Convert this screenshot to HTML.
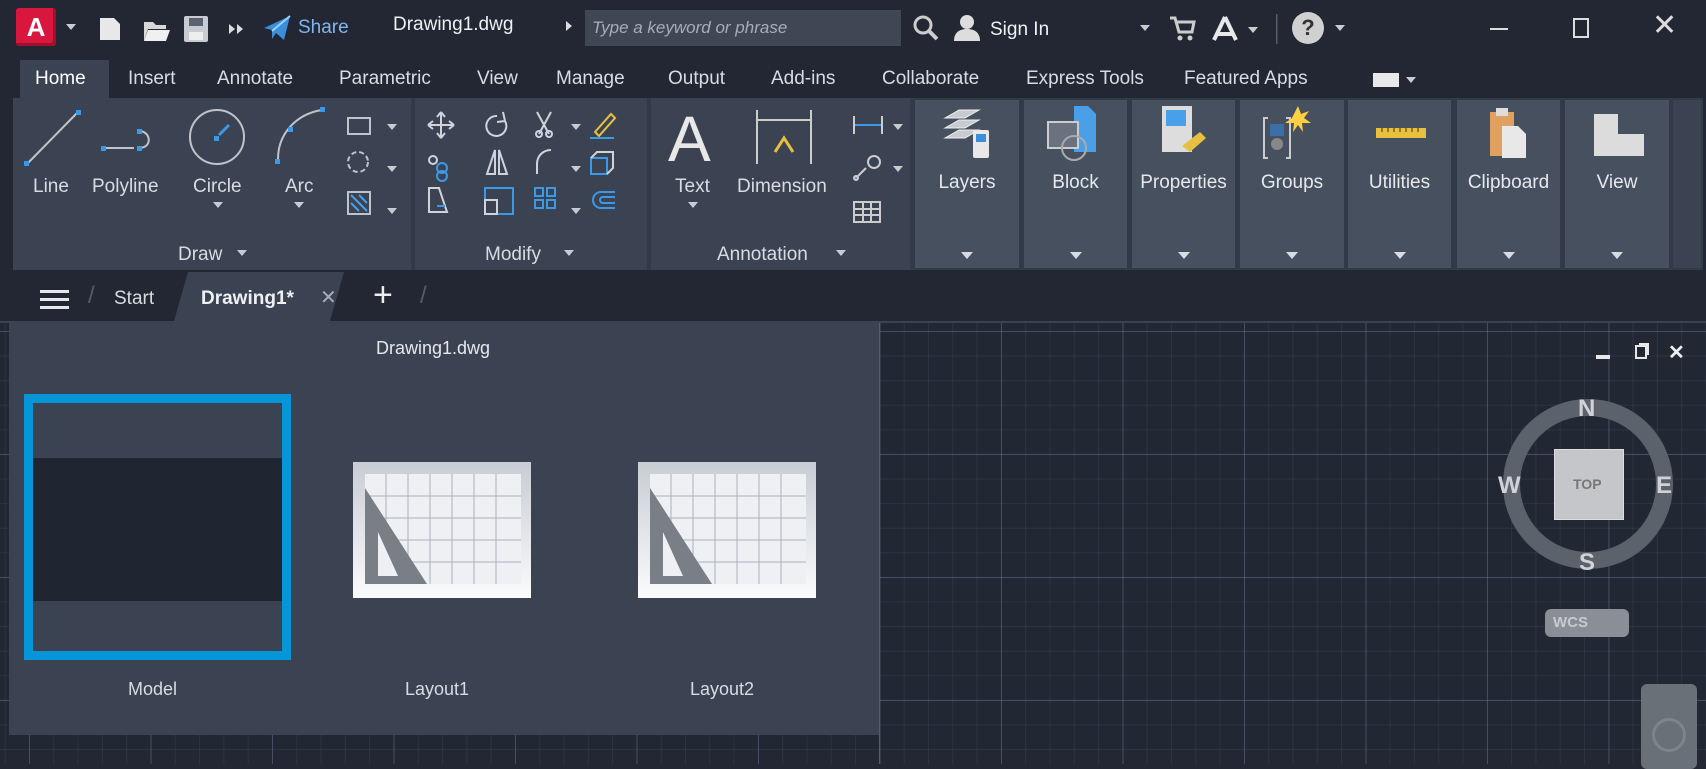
<!DOCTYPE html>
<html><head><meta charset="utf-8"><style>
*{margin:0;padding:0;box-sizing:border-box}
body{width:1706px;height:764px;overflow:hidden;background:#222733;font-family:"Liberation Sans",sans-serif;color:#e6e8ec;position:relative}
.a{position:absolute;white-space:nowrap}
.t{font-size:19px;color:#d8dce2}
.pl{position:absolute;background:#3b4353}
.bp{position:absolute;top:100px;height:168px;background:#46505f}
.bp span{position:absolute;left:0;right:0;top:72px;text-align:center;font-size:19px;color:#e6e8ec}
.bp i{position:absolute;left:50%;margin-left:-6px;top:152px;border:6px solid transparent;border-top:7px solid #d8dce2}
.tri{position:absolute;border:5px solid transparent;border-top:6px solid #c8ccd2}
.grid{background-color:#212733;background-image:linear-gradient(90deg,rgba(120,130,160,.35) 1px,transparent 1px),linear-gradient(rgba(120,130,160,.35) 1px,transparent 1px),linear-gradient(90deg,rgba(90,100,125,.2) 1px,transparent 1px),linear-gradient(rgba(90,100,125,.2) 1px,transparent 1px);background-size:121.5px 123px,121.5px 123px,24.3px 24.6px,24.3px 24.6px;background-position:29px 10px,29px 10px,29px 10px,29px 10px}
</style></head><body>
<!-- title bar -->
<div class="a" style="left:0;top:0;width:1706px;height:58px;background:#222733"></div>
<div class="a" style="left:16px;top:8px;width:40px;height:38px;background:#d8163e;border-radius:3px;box-shadow:inset -3px -3px 0 #a0102c;color:#fff;font:bold 26px 'Liberation Sans';text-align:center;line-height:38px">A</div>
<div class="tri" style="left:66px;top:24px"></div>
<svg class="a" style="left:96px;top:12px" width="160" height="34"><path d="M4 6h14l6 6v16H4z" fill="#e8e8e8"/><path d="M48 10h9l3 3h10v4H52l-4 12z" fill="#d8d8d8"/><path d="M52 18h22l-4 11H48z" fill="#f0f0f0"/><rect x="88" y="4" width="24" height="26" rx="2" fill="#c8ccd2"/><rect x="93" y="6" width="14" height="8" fill="#5a6170"/><rect x="93" y="20" width="14" height="8" fill="#eee"/><path d="M133 12l6 5-6 5zM141 12l6 5-6 5z" fill="#ddd"/></svg>
<svg class="a" style="left:262px;top:14px" width="30" height="28"><path d="M2 14L28 2l-6 24-8-7-4 6v-9z" fill="#3a8fd8"/><path d="M10 17L28 2" stroke="#9cd0ff" stroke-width="2"/></svg>
<div class="a t" style="left:298px;top:17px;color:#7fb6f0">Share</div>
<div class="a t" style="left:393px;top:14px;color:#eef0f3">Drawing1.dwg</div>
<div class="a" style="left:566px;top:21px;border:5px solid transparent;border-left:6px solid #ddd"></div>
<div class="a" style="left:585px;top:10px;width:316px;height:36px;background:#3f4654"></div>
<div class="a" style="left:592px;top:18px;font-style:italic;font-size:17px;color:#a8adb6">Type a keyword or phrase</div>
<svg class="a" style="left:912px;top:14px" width="28" height="28"><circle cx="11" cy="11" r="8" fill="none" stroke="#ccc" stroke-width="3"/><path d="M17 17l8 8" stroke="#ccc" stroke-width="4"/></svg>
<svg class="a" style="left:952px;top:13px" width="30" height="30"><circle cx="15" cy="9" r="7" fill="#ddd"/><path d="M2 28c0-9 6-12 13-12s13 3 13 12z" fill="#ddd"/></svg>
<div class="a t" style="left:990px;top:19px;color:#eef0f3">Sign In</div>
<div class="tri" style="left:1140px;top:25px"></div>
<svg class="a" style="left:1168px;top:14px" width="110" height="30"><path d="M2 4h5l4 14h13l2-10H9" fill="none" stroke="#ccc" stroke-width="3"/><circle cx="12" cy="24" r="2.5" fill="#ccc"/><circle cx="22" cy="24" r="2.5" fill="#ccc"/><path d="M57 3L46 26M57 3l11 23M49 20h16" stroke="#e8e8e8" stroke-width="4" fill="none"/><path d="M80 13l5 6 5-6z" fill="#ccc"/><rect x="108" y="0" width="1.5" height="32" fill="#555c68"/></svg>
<div class="a" style="left:1292px;top:12px;width:32px;height:32px;border-radius:50%;background:#d0d0d0;color:#333;font:bold 22px 'Liberation Sans';text-align:center;line-height:32px">?</div>
<div class="tri" style="left:1335px;top:25px"></div>
<div class="a" style="left:1490px;top:28px;width:18px;height:2px;background:#ddd"></div>
<div class="a" style="left:1573px;top:18px;width:16px;height:20px;border:2px solid #ddd"></div>
<div class="a" style="left:1652px;top:8px;font-size:30px;color:#ddd">✕</div>
<!-- menu tabs -->
<div class="a" style="left:20px;top:60px;width:89px;height:38px;background:#3b4353"></div>
<div class="a t" style="left:35px;top:68px;color:#fff">Home</div>
<div class="a t" style="left:128px;top:68px">Insert</div>
<div class="a t" style="left:217px;top:68px">Annotate</div>
<div class="a t" style="left:339px;top:68px">Parametric</div>
<div class="a t" style="left:477px;top:68px">View</div>
<div class="a t" style="left:556px;top:68px">Manage</div>
<div class="a t" style="left:668px;top:68px">Output</div>
<div class="a t" style="left:771px;top:68px">Add-ins</div>
<div class="a t" style="left:882px;top:68px">Collaborate</div>
<div class="a t" style="left:1026px;top:68px">Express Tools</div>
<div class="a t" style="left:1184px;top:68px">Featured Apps</div>
<div class="a" style="left:1373px;top:73px;width:26px;height:14px;background:#e8e8e8"></div>
<div class="tri" style="left:1406px;top:77px"></div>
<!-- ribbon -->
<div class="pl" style="left:13px;top:98px;width:1690px;height:172px;background:#323a48"></div>
<div class="pl" style="left:13px;top:98px;width:398px;height:172px"></div>
<div class="pl" style="left:415px;top:98px;width:232px;height:172px"></div>
<div class="pl" style="left:651px;top:98px;width:259px;height:172px"></div>
<div class="bp" style="left:915px;width:104px"><span>Layers</span><i></i></div>
<div class="bp" style="left:1024px;width:103px"><span>Block</span><i></i></div>
<div class="bp" style="left:1132px;width:103px"><span>Properties</span><i></i></div>
<div class="bp" style="left:1240px;width:104px"><span>Groups</span><i></i></div>
<div class="bp" style="left:1348px;width:103px"><span>Utilities</span><i></i></div>
<div class="bp" style="left:1457px;width:103px"><span>Clipboard</span><i></i></div>
<div class="bp" style="left:1565px;width:104px"><span>View</span><i></i></div>
<div class="bp" style="left:1673px;width:28px;background:#3b4353"></div>
<!-- big panel icons -->
<svg class="a" style="left:935px;top:104px" width="70" height="60"><path d="M10 34l14-8h20l-14 8zM10 24l14-8h20l-14 8zM10 14l14-8h20l-14 8z" fill="#c8ccd2" stroke="#eee"/><rect x="38" y="26" width="16" height="28" rx="2" fill="#e8e8e8"/><rect x="41" y="30" width="10" height="8" fill="#3a8fd8"/></svg>
<svg class="a" style="left:1044px;top:104px" width="70" height="60"><path d="M30 2h14l8 8v38H30z" fill="#4aa0e8"/><rect x="4" y="18" width="30" height="26" fill="#6a7280" stroke="#ccc" stroke-width="2"/><circle cx="30" cy="44" r="12" fill="none" stroke="#aaa" stroke-width="2"/></svg>
<svg class="a" style="left:1156px;top:104px" width="70" height="60"><rect x="6" y="2" width="30" height="46" fill="#ddd"/><rect x="10" y="6" width="20" height="16" fill="#4aa0e8"/><path d="M26 42l18-14 6 6-16 14z" fill="#e8c040"/></svg>
<svg class="a" style="left:1262px;top:104px" width="70" height="60"><path d="M6 14H2v40h4M24 14h4v40h-4" fill="none" stroke="#ccc" stroke-width="2"/><rect x="8" y="20" width="14" height="12" fill="#3a6fa8"/><circle cx="15" cy="40" r="6" fill="#888"/><path d="M36 2l3 8 8-3-5 7 7 5-9 0 1 9-5-7-5 7 1-9-9 0 7-5z" fill="#ffd040"/></svg>
<svg class="a" style="left:1372px;top:124px" width="60" height="20"><rect x="4" y="4" width="50" height="10" fill="#e8c040"/><path d="M10 4v4M16 4v4M22 4v4M28 4v4M34 4v4M40 4v4M46 4v4" stroke="#806010" stroke-width="1.5"/></svg>
<svg class="a" style="left:1482px;top:104px" width="60" height="60"><rect x="8" y="8" width="24" height="44" fill="#e0a060"/><rect x="14" y="4" width="12" height="8" fill="#ddd"/><path d="M20 22h16l8 8v24H20z" fill="#e8e8e8"/></svg>
<svg class="a" style="left:1590px;top:110px" width="60" height="50"><path d="M4 4h24v20h26v22H4z" fill="#dcdcdc"/></svg>
<!-- draw panel icons -->
<svg class="a" style="left:20px;top:104px" width="380" height="130" fill="none">
<path d="M7 60L58 8" stroke="#c0c4ca" stroke-width="2"/><rect x="4" y="57" width="5" height="5" fill="#3a9ae8"/><rect x="56" y="6" width="5" height="5" fill="#3a9ae8"/>
<path d="M84 44h30M119 27c12 0 14 17 0 17" stroke="#c0c4ca" stroke-width="2"/><rect x="81" y="42" width="5" height="5" fill="#3a9ae8"/><rect x="117" y="42" width="5" height="5" fill="#3a9ae8"/><rect x="117" y="25" width="5" height="5" fill="#3a9ae8"/>
<circle cx="197" cy="33" r="27" stroke="#c0c4ca" stroke-width="2"/><path d="M199 31l10-10" stroke="#3a9ae8" stroke-width="3"/><rect x="194" y="32" width="5" height="5" fill="#3a9ae8"/>
<path d="M258 55c0-25 18-45 44-49" stroke="#c0c4ca" stroke-width="2"/><rect x="255" y="55" width="5" height="5" fill="#3a9ae8"/><rect x="300" y="3" width="5" height="5" fill="#3a9ae8"/><rect x="268" y="23" width="5" height="5" fill="#3a9ae8"/>
<rect x="328" y="14" width="22" height="16" stroke="#c0c4ca" stroke-width="2"/><circle cx="338" cy="58" r="10" stroke="#c0c4ca" stroke-width="2" stroke-dasharray="5 3"/><rect x="328" y="88" width="22" height="22" stroke="#c0c4ca" stroke-width="2"/><path d="M331 91l16 16M331 99l8 8M339 91l8 8" stroke="#4aa0e8" stroke-width="2"/>
</svg>
<div class="tri" style="left:387px;top:124px"></div><div class="tri" style="left:387px;top:166px"></div><div class="tri" style="left:387px;top:208px"></div>
<div class="a t" style="left:33px;top:176px">Line</div><div class="a t" style="left:92px;top:176px">Polyline</div><div class="a t" style="left:193px;top:176px">Circle</div><div class="a t" style="left:285px;top:176px">Arc</div>
<div class="tri" style="left:213px;top:202px"></div><div class="tri" style="left:294px;top:202px"></div>
<div class="a t" style="left:178px;top:244px">Draw</div><div class="tri" style="left:237px;top:250px"></div>
<!-- modify -->
<svg class="a" style="left:425px;top:110px" width="200" height="120" fill="none" stroke="#d0d4da" stroke-width="2">
<path d="M16 2v26M3 15h26M16 2l-4 5M16 2l4 5M3 15l5-4M3 15l5 4M29 15l-5-4M29 15l-5 4M16 28l-4-5M16 28l4-5"/>
<path d="M72 6a10 10 0 1 0 8 5M78 2l2 9-8 1"/>
<path d="M112 2l12 22M126 2l-12 22" /><circle cx="114" cy="24" r="3"/><circle cx="124" cy="24" r="3"/>
<path d="M170 22l16-18 4 4-16 18z" stroke="#e8c040"/><path d="M165 28h24" stroke="#3a9ae8"/>
<circle cx="17" cy="58" r="5" stroke="#3a9ae8"/><circle cx="17" cy="66" r="5" stroke="#3a9ae8"/><circle cx="8" cy="50" r="4"/>
<path d="M70 40v24h-8zM74 40v24h8z"/><path d="M112 64v-10c0-8 6-14 14-14"/>
<rect x="166" y="48" width="16" height="16" stroke="#3a9ae8"/><path d="M166 48l6-6h16v16l-6 6"/>
<path d="M4 78h10l8 24H4z"/><path d="M12 96h8" stroke="#3a9ae8"/><rect x="60" y="78" width="28" height="26" stroke="#3a9ae8"/><rect x="60" y="90" width="12" height="14"/>
<rect x="110" y="78" width="8" height="8" stroke="#3a9ae8"/><rect x="122" y="78" width="8" height="8" stroke="#3a9ae8"/><rect x="110" y="90" width="8" height="8" stroke="#3a9ae8"/><rect x="122" y="90" width="8" height="8" stroke="#3a9ae8"/>
<path d="M190 82h-14a8 8 0 0 0 0 16h14M190 87h-12a3 3 0 0 0 0 6h12" stroke="#3a9ae8"/>
</svg>
<div class="tri" style="left:571px;top:124px"></div><div class="tri" style="left:571px;top:166px"></div><div class="tri" style="left:571px;top:208px"></div>
<div class="a t" style="left:485px;top:244px">Modify</div><div class="tri" style="left:564px;top:250px"></div>
<!-- annotation -->
<div class="a" style="left:668px;top:104px;font-size:64px;color:#e8e8e8;line-height:70px">A</div>
<svg class="a" style="left:755px;top:108px" width="60" height="60" fill="none"><path d="M2 2v54M56 2v54M2 12h54" stroke="#ccc" stroke-width="2"/><path d="M20 44l9-14 9 14" stroke="#e8c040" stroke-width="3"/></svg>
<svg class="a" style="left:852px;top:112px" width="40" height="120" fill="none" stroke="#ccc" stroke-width="2"><path d="M2 4v18M30 4v18M2 13h28" stroke="#3a9ae8"/><path d="M2 4v18M30 4v18"/><path d="M4 66l10-10" /><circle cx="22" cy="50" r="6"/><circle cx="4" cy="66" r="2" fill="#3a9ae8"/><rect x="2" y="90" width="26" height="20"/><path d="M2 97h26M2 103h26M11 90v20M19 90v20"/></svg>
<div class="tri" style="left:893px;top:124px"></div><div class="tri" style="left:893px;top:166px"></div>
<div class="a t" style="left:675px;top:176px">Text</div><div class="a t" style="left:737px;top:176px">Dimension</div>
<div class="tri" style="left:688px;top:202px"></div>
<div class="a t" style="left:717px;top:244px">Annotation</div><div class="tri" style="left:836px;top:250px"></div>
<!-- tab bar -->
<div class="a" style="left:40px;top:290px;width:29px;height:3px;background:#e6e8ec;box-shadow:0 8px 0 #e6e8ec,0 16px 0 #e6e8ec"></div>
<div class="a" style="left:88px;top:282px;color:#555c68;font-size:24px">/</div>
<div class="a t" style="left:114px;top:288px">Start</div>
<div class="a" style="left:174px;top:272px;width:170px;height:49px;background:#3b4353;clip-path:polygon(14px 0,100% 0,calc(100% - 14px) 100%,0 100%)"></div>
<div class="a t" style="left:201px;top:288px;font-weight:bold;color:#eef0f3">Drawing1*</div>
<div class="a" style="left:320px;top:285px;font-size:20px;color:#aab">✕</div>
<div class="a" style="left:373px;top:276px;font-size:34px;color:#eee;font-weight:300">+</div>
<div class="a" style="left:420px;top:282px;color:#555c68;font-size:24px">/</div>
<!-- viewport -->
<div class="a grid" style="left:0;top:321px;width:1706px;height:443px"></div>
<div class="pl" style="left:9px;top:321px;width:870px;height:414px"></div>
<div class="a" style="left:879px;top:321px;width:1px;height:443px;background:#2e7a3a"></div>
<div class="a" style="left:0;top:321px;width:1706px;height:2px;background:#3b4353"></div>
<div class="a" style="left:376px;top:338px;font-size:18px;color:#e6e8ec">Drawing1.dwg</div>
<div class="a" style="left:24px;top:394px;width:267px;height:266px;border:9px solid #0696d7;background:#3b4353"><div style="position:absolute;left:0;right:0;top:55px;height:143px;background:#202631"></div></div>
<svg class="a" style="left:353px;top:462px" width="178" height="136"><defs><linearGradient id="g" x1="0" y1="0" x2="0" y2="1"><stop offset="0" stop-color="#c8ccd4"/><stop offset="1" stop-color="#fafbfc"/></linearGradient></defs><rect width="178" height="136" fill="url(#g)"/><rect x="12" y="12" width="156" height="110" fill="#eef0f4"/><g stroke="#aab0bc" stroke-width="1"><path d="M33 12v110M55 12v110M77 12v110M99 12v110M121 12v110M143 12v110M12 34h156M12 56h156M12 78h156M12 100h156"/></g><path d="M12 26l62 96H12z" fill="#7a7e86"/><path d="M25 70l20 44H25z" fill="#eef0f4"/></svg>
<svg class="a" style="left:638px;top:462px" width="178" height="136"><rect width="178" height="136" fill="url(#g)"/><rect x="12" y="12" width="156" height="110" fill="#eef0f4"/><g stroke="#aab0bc" stroke-width="1"><path d="M33 12v110M55 12v110M77 12v110M99 12v110M121 12v110M143 12v110M12 34h156M12 56h156M12 78h156M12 100h156"/></g><path d="M12 26l62 96H12z" fill="#7a7e86"/><path d="M25 70l20 44H25z" fill="#eef0f4"/></svg>
<div class="a t" style="left:128px;top:679px;font-size:18px">Model</div>
<div class="a t" style="left:405px;top:679px;font-size:18px">Layout1</div>
<div class="a t" style="left:690px;top:679px;font-size:18px">Layout2</div>
<!-- viewcube -->
<div class="a" style="left:1596px;top:355px;width:14px;height:4px;background:#e8e8e8"></div>
<div class="a" style="left:1635px;top:345px;width:12px;height:14px;border:2px solid #e8e8e8;box-shadow:3px -3px 0 -1px #e8e8e8"></div>
<div class="a" style="left:1668px;top:340px;font-size:20px;font-weight:bold;color:#eee">✕</div>
<div class="a" style="left:1503px;top:399px;width:170px;height:170px;border-radius:50%;border:17px solid #5c626c"></div>
<div class="a" style="left:1554px;top:449px;width:70px;height:71px;background:#c4c6ca;border:1px solid #ddd"></div>
<div class="a" style="left:1573px;top:476px;font-size:14px;font-weight:bold;color:#777">TOP</div>
<div class="a" style="left:1578px;top:395px;font-size:24px;font-weight:bold;color:#d0d2d6">N</div>
<div class="a" style="left:1579px;top:549px;font-size:24px;font-weight:bold;color:#d0d2d6">S</div>
<div class="a" style="left:1498px;top:472px;font-size:24px;font-weight:bold;color:#d0d2d6">W</div>
<div class="a" style="left:1656px;top:472px;font-size:24px;font-weight:bold;color:#d0d2d6">E</div>
<div class="a" style="left:1545px;top:609px;width:84px;height:28px;border-radius:6px;background:#8a8e96;color:#c8cace;font-size:15px;font-weight:bold;padding:5px 8px">WCS</div>
<div class="a" style="left:1641px;top:684px;width:56px;height:85px;border-radius:6px;background:#6a7078"></div>
<div class="a" style="left:1652px;top:718px;width:34px;height:34px;border-radius:50%;border:3px solid #7e848c"></div>
</body></html>
